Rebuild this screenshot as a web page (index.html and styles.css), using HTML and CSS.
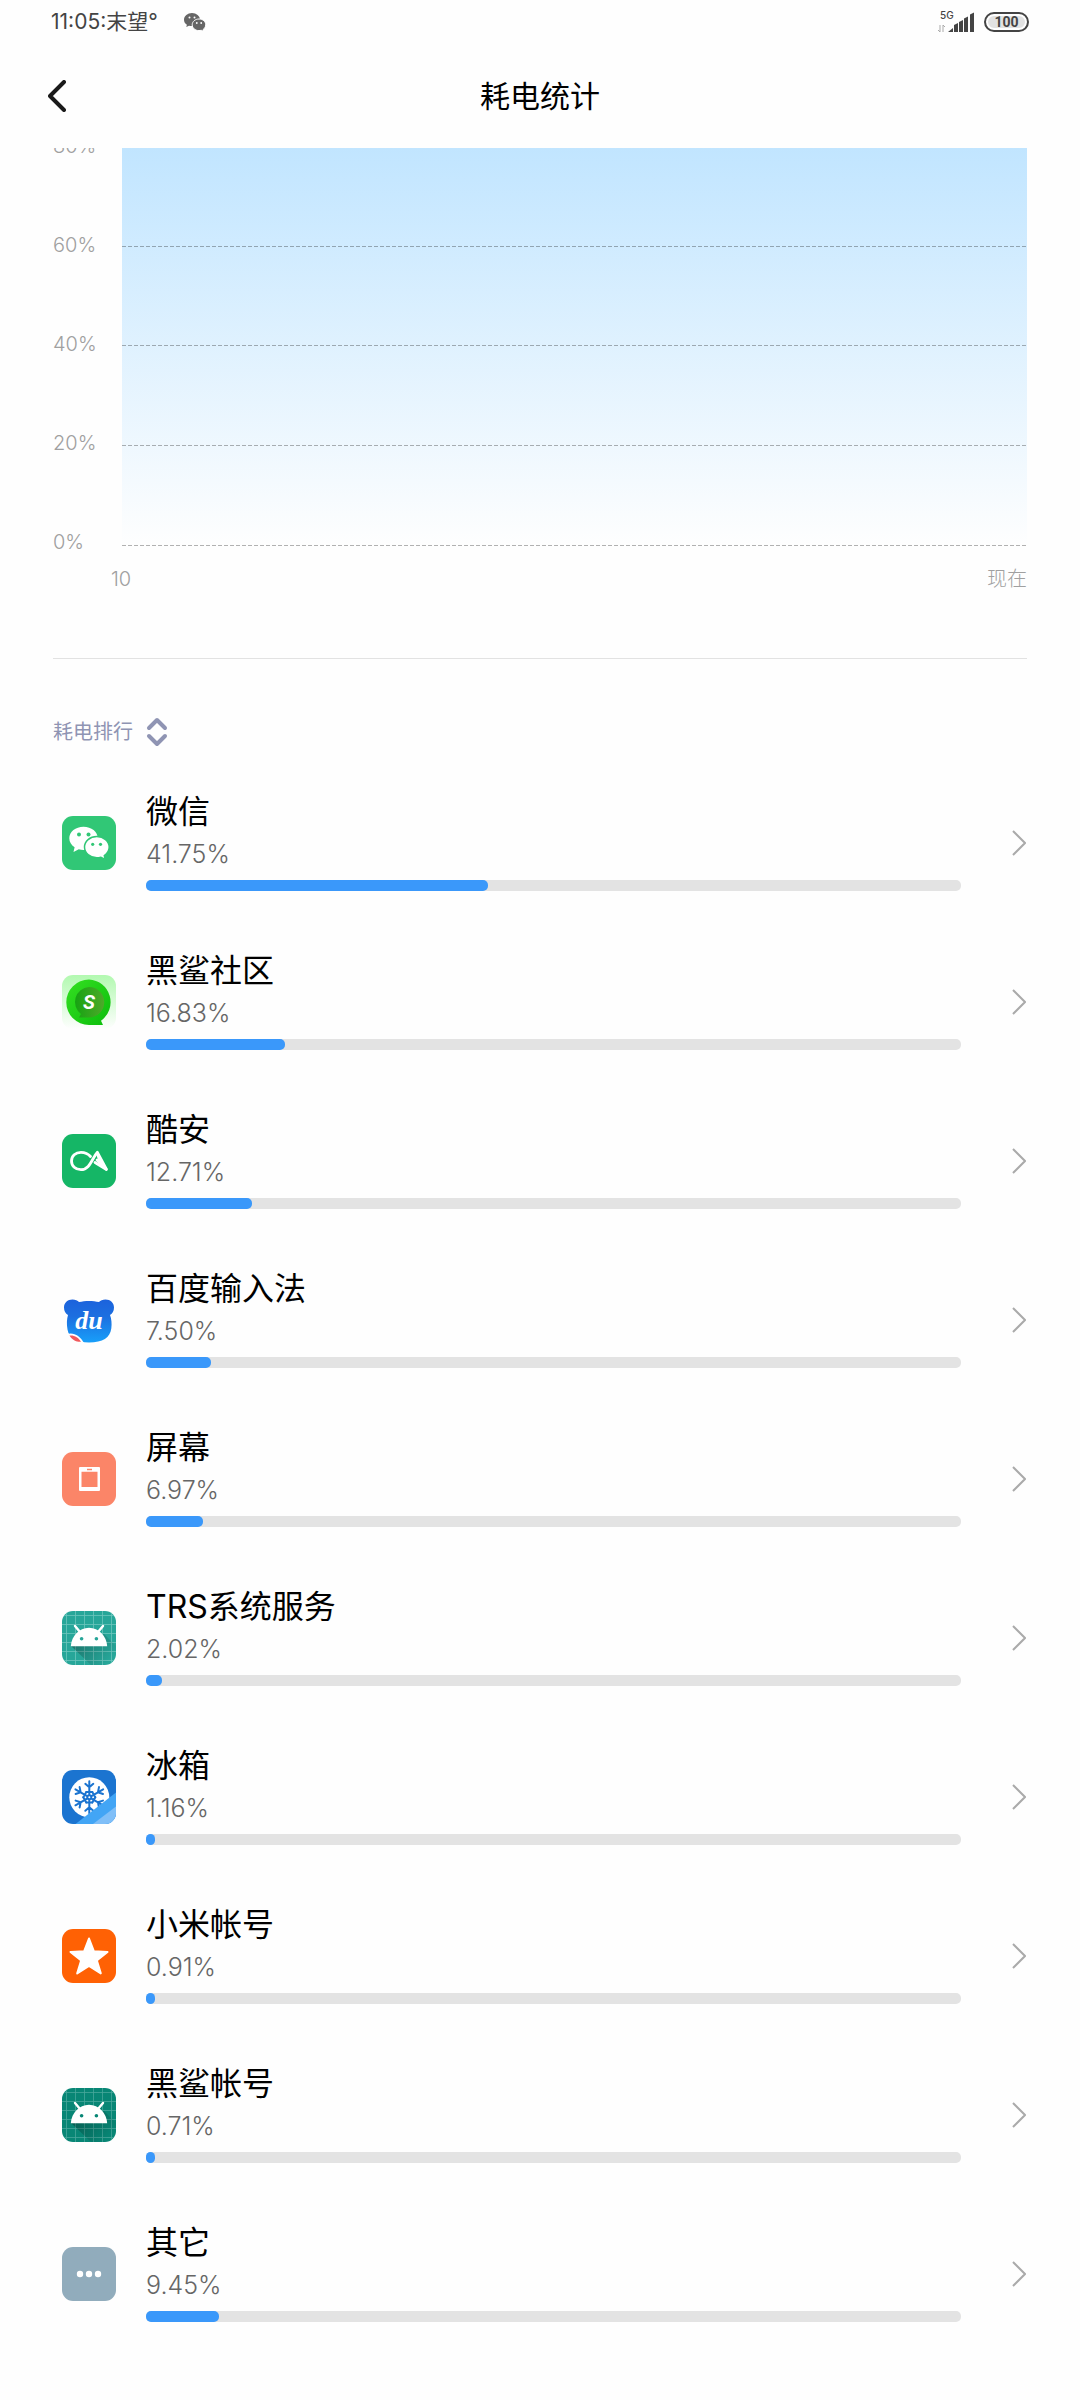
FILE: index.html
```html
<!DOCTYPE html>
<html lang="zh-CN">
<head>
  <meta charset="utf-8">
  <title>耗电统计</title>
  <meta name="viewport" content="width=device-width">
  <link rel="stylesheet" href="styles.css">
</head>
<body>

<div class="status">
  <span class="status-time">11:05:末望°</span>
  <svg class="status-wechat" width="22" height="18" viewBox="0 0 22 18">
    <path fill="#666" d="M8 0C3.600 0 0 3 0 6.700c0 2.100 1.100 3.900 2.900 5.100L2.300 14l2.700-1.300c1 .3 1.900.4 3 .4C12.400 13.100 16 10.400 16 6.700S12.400 0 8 0z"/>
    <path fill="#666" stroke="#fefefe" d="M15 6c-3.700 0-6.800 2.500-6.800 5.800s3.100 5.800 6.800 5.800c.8 0 1.600-.1 2.300-.3l2.400 1-.5-1.900c1.500-1.100 2.500-2.700 2.500-4.600C21.700 8.500 18.700 6 15 6z"/>
    <g fill="#fefefe"><circle cx="5.500" cy="4.500" r="1"/><circle cx="10.500" cy="4.500" r="1"/><circle cx="12.800" cy="10" r=".9"/><circle cx="17.200" cy="10" r=".9"/></g>
  </svg>
  <svg class="status-signal" width="38" height="26" viewBox="0 -2 38 26">
    <text x="3" y="8" class="status-net">5G</text>
    <path d="M3 14v7l-2-2M6 21v-7l2 2" fill="none" stroke="#aaa"/>
    <path fill="#444" d="M11 21l5-4v4zM17 14l4-2V21h-4zM22 11l4-2V21h-4zM27 7.500l4-2V21h-4zM33 3.500l4-2V21h-4z"/>
  </svg>
  <span class="battery">100</span>
</div>

<header class="appbar">
  <button type="button" class="back" aria-label="返回">
    <svg width="18" height="32" viewBox="0 0 18 32"><path d="M16 2L2 16l14 14" fill="none" stroke="#1a1a1a" stroke-width="4" stroke-linecap="round" stroke-linejoin="round"/></svg>
  </button>
  <h1>耗电统计</h1>
</header>

<main>
  <section class="chart">
    <div class="chart-body">
      <div class="y-axis">
        <span>80%</span>
        <span>60%</span>
        <span>40%</span>
        <span>20%</span>
        <span>0%</span>
      </div>
      <div class="plot">
        <div class="band"></div>
        <div class="band"></div>
        <div class="band"></div>
        <div class="band"></div>
      </div>
    </div>
    <div class="x-axis"><span>10</span><span>现在</span></div>
  </section>

  <button type="button" class="sort">
    耗电排行
    <svg width="22" height="30" viewBox="0 0 22 30"><path d="M3 11l8-8 8 8M3 19l8 8 8-8" fill="none" stroke="#8f94b3" stroke-width="4" stroke-linecap="round" stroke-linejoin="round"/></svg>
  </button>

  <ul class="apps">
    <li><a class="app" href="#wechat">
      <svg class="icon" viewBox="0 0 54 54">
        <rect width="54" height="54" rx="11" fill="#31c776"/>
        <path fill="#fff" d="M21.500 10.700C13.600 10.700 7.300 15.800 7.300 22.200c0 3.700 2 6.900 5.300 9L11.500 36l5.300-2.700c1.500.4 3 .6 4.700.6 7.900 0 14.300-5.200 14.300-11.700S29.400 10.700 21.500 10.700z"/>
        <path fill="#fff" stroke="#31c776" stroke-width="1.500" d="M34.800 20.500c-6.900 0-12.300 4.700-12.300 10.600s5.400 10.700 12.300 10.700c1.500 0 2.800-.2 4.100-.6l4.300 2.300-.9-3.900c3-2 4.900-5 4.900-8.500 0-5.900-5.500-10.600-12.400-10.600z"/>
        <g fill="#31c776"><circle cx="17" cy="18.500" r="2"/><circle cx="26.500" cy="18.500" r="2"/><circle cx="30.700" cy="28.300" r="1.600"/><circle cx="38.500" cy="28.300" r="1.600"/></g>
      </svg>
      <div class="info">
        <h2>微信</h2>
        <p>41.75%</p>
        <div class="bar"><div class="fill" style="width: 42%"></div></div>
      </div>
      <svg class="arrow" viewBox="0 0 14 26"><path d="M1 1l12 12L1 25"/></svg>
    </a></li>

    <li><a class="app" href="#community">
      <svg class="icon" viewBox="0 0 54 54">
        <defs>
          <linearGradient id="mint" x2="0" y2="1"><stop stop-color="#b2f9b0"/><stop offset="1" stop-color="#fefefe"/></linearGradient>
          <linearGradient id="lime" x2="1" y2="1"><stop stop-color="#35e022"/><stop offset="1" stop-color="#0bbd0b"/></linearGradient>
          <linearGradient id="leaf" x2="1"><stop stop-color="#16a312"/><stop offset="1" stop-color="#4ea92a"/></linearGradient>
        </defs>
        <rect width="54" height="54" rx="11" fill="url(#mint)"/>
        <path fill="url(#lime)" d="M27 4.500a22.700 22.700 0 0 0 0 45.400h14l-2-4.200A22.700 22.700 0 0 0 27 4.500z"/>
        <path fill="url(#leaf)" d="M27 12a15 15 0 1 1 0 30.500H17l2-3.500A15 15 0 0 1 27 12z"/>
        <text x="27" y="34" class="mark-s">S</text>
      </svg>
      <div class="info">
        <h2>黑鲨社区</h2>
        <p>16.83%</p>
        <div class="bar"><div class="fill" style="width: 17%"></div></div>
      </div>
      <svg class="arrow" viewBox="0 0 14 26"><path d="M1 1l12 12L1 25"/></svg>
    </a></li>

    <li><a class="app" href="#coolapk">
      <svg class="icon" viewBox="0 0 54 54">
        <rect width="54" height="54" rx="11" fill="#15b666"/>
        <g fill="none" stroke="#fff" stroke-width="2.800" stroke-linejoin="round" stroke-linecap="round">
          <path d="M28.500 22.500C26 19.500 23 18.300 19 18.300c-5.500 0-9.500 3.800-9.500 8.700s4 8.700 9.500 8.700c9 0 11-11.500 16.400-17.400L44.500 35.500 33 28.500"/>
          <path d="M35.500 20L39 30M44 35l-9-9"/>
        </g>
      </svg>
      <div class="info">
        <h2>酷安</h2>
        <p>12.71%</p>
        <div class="bar"><div class="fill" style="width: 13%"></div></div>
      </div>
      <svg class="arrow" viewBox="0 0 14 26"><path d="M1 1l12 12L1 25"/></svg>
    </a></li>

    <li><a class="app" href="#ime">
      <svg class="icon" viewBox="0 0 54 54">
        <defs><linearGradient id="bear" gradientUnits="userSpaceOnUse" x1="0" y1="6" x2="0" y2="50"><stop stop-color="#1c62dc"/><stop offset=".4" stop-color="#1c6fe0"/><stop offset="1" stop-color="#18a0fa"/></linearGradient></defs>
        <path fill="url(#bear)" d="M10.500 6.500c3 0 5 1 6.500 2.500 6-1.500 14-1.500 20 0 1.500-1.500 3.500-2.500 6.500-2.500 5 0 8.500 3.500 8.500 8 0 3.500-1.500 6-4 7.500 1.500 4 2 8.500 1.300 13.500C48 44.500 41 49.500 27 49.500c-12 0-20-4-21.500-13C4.500 31 4.800 26 6 22c-2.500-1.500-4-4-4-7.500 0-4.500 3.500-8 8.500-8z"/>
        <path fill="#fefefe" d="M5 41c7-2 13 2 17 9L8 50z"/>
        <path fill="#f1595c" d="M7.500 42.500c5-.5 9 2 11.500 6.300-5 .2-9-2-11.500-6.300z"/>
        <text x="27" y="36" class="mark-du">du</text>
      </svg>
      <div class="info">
        <h2>百度输入法</h2>
        <p>7.50%</p>
        <div class="bar"><div class="fill" style="width: 8%"></div></div>
      </div>
      <svg class="arrow" viewBox="0 0 14 26"><path d="M1 1l12 12L1 25"/></svg>
    </a></li>

    <li><a class="app" href="#screen">
      <svg class="icon" viewBox="0 0 54 54">
        <rect width="54" height="54" rx="11" fill="#fb8568"/>
        <path fill="#fff" fill-rule="evenodd" d="M18 15h19a1 1 0 0 1 1 1v22a1 1 0 0 1-1 1H18a1 1 0 0 1-1-1V16a1 1 0 0 1 1-1zm1.500 4.700V35h16V19.700zM25 16.800v1.400h5v-1.400z"/>
      </svg>
      <div class="info">
        <h2>屏幕</h2>
        <p>6.97%</p>
        <div class="bar"><div class="fill" style="width: 7%"></div></div>
      </div>
      <svg class="arrow" viewBox="0 0 14 26"><path d="M1 1l12 12L1 25"/></svg>
    </a></li>

    <li><a class="app" href="#trs">
      <svg class="icon" viewBox="0 0 54 54">
        <defs>
          <clipPath id="tile"><rect width="54" height="54" rx="11"/></clipPath>
          <linearGradient id="shade" x2="1" y2=".6"><stop stop-color="#000" stop-opacity=".35"/><stop offset="1" stop-color="#000" stop-opacity="0"/></linearGradient>
        </defs>
        <g clip-path="url(#tile)">
          <rect width="54" height="54" fill="#27a699"/>
          <path stroke="#6cc5bc" stroke-width=".8" fill="none" d="M4.500 0v54M13.500 0v54M22.500 0v54M31.500 0v54M40.500 0v54M49.500 0v54M0 4.500h54M0 13.500h54M0 22.500h54M0 31.500h54M0 40.500h54M0 49.500h54"/>
          <path fill="url(#shade)" d="M9 35l20 19h25V35l-12-12z"/>
        </g>
        <path fill="#fff" d="M8.800 35.300C9.500 25 17 16.700 27 16.700S44.500 25 45.200 35.300z"/>
        <path stroke="#fff" stroke-width="2.400" stroke-linecap="round" d="M13 15l5 6M41 15l-5 6"/>
        <g fill="#27a699"><circle cx="19.600" cy="27.800" r="1.800"/><circle cx="34.400" cy="27.800" r="1.800"/></g>
      </svg>
      <div class="info">
        <h2>TRS系统服务</h2>
        <p>2.02%</p>
        <div class="bar"><div class="fill" style="width: 2%"></div></div>
      </div>
      <svg class="arrow" viewBox="0 0 14 26"><path d="M1 1l12 12L1 25"/></svg>
    </a></li>

    <li><a class="app" href="#icebox">
      <svg class="icon" viewBox="0 0 54 54">
        <defs>
          <g id="arm"><path d="M0-3V-16M0-10l-4-3.500M0-10l4-3.500M-3-5.200h6"/></g>
        </defs>
        <g clip-path="url(#tile)">
          <rect width="54" height="54" fill="#1b74d0"/>
          <circle cx="27.300" cy="27.300" r="20" fill="#fff"/>
          <g transform="translate(27.300 27.300)" fill="none" stroke="#1b74d0" stroke-width="2" stroke-linecap="round">
            <circle r="2"/>
            <use href="#arm"/>
            <use href="#arm" transform="rotate(60)"/>
            <use href="#arm" transform="rotate(120)"/>
            <use href="#arm" transform="rotate(180)"/>
            <use href="#arm" transform="rotate(240)"/>
            <use href="#arm" transform="rotate(300)"/>
          </g>
          <path fill="#42a5f5" d="M54 22.500V54H13.500z"/>
          <path fill="#80bff8" d="M54 36.500V54H31z"/>
        </g>
      </svg>
      <div class="info">
        <h2>冰箱</h2>
        <p>1.16%</p>
        <div class="bar"><div class="fill" style="width: 1%"></div></div>
      </div>
      <svg class="arrow" viewBox="0 0 14 26"><path d="M1 1l12 12L1 25"/></svg>
    </a></li>

    <li><a class="app" href="#mi-account">
      <svg class="icon" viewBox="0 0 54 54">
        <rect width="54" height="54" rx="11" fill="#ff6104"/>
        <path fill="#fff" stroke="#fff" stroke-width="2" stroke-linejoin="round" d="M27 9.500l4.800 12.700 13.700.7-10.700 8.500 4 13L27 37l-11.800 7.400 4-13L8.500 22.900l13.700-.7z"/>
      </svg>
      <div class="info">
        <h2>小米帐号</h2>
        <p>0.91%</p>
        <div class="bar"><div class="fill" style="width: 1%"></div></div>
      </div>
      <svg class="arrow" viewBox="0 0 14 26"><path d="M1 1l12 12L1 25"/></svg>
    </a></li>

    <li><a class="app" href="#shark-account">
      <svg class="icon" viewBox="0 0 54 54">
        <g clip-path="url(#tile)">
          <rect width="54" height="54" fill="#088675"/>
          <path stroke="#48a79a" stroke-width=".8" fill="none" d="M4.500 0v54M13.500 0v54M22.500 0v54M31.500 0v54M40.500 0v54M49.500 0v54M0 4.500h54M0 13.500h54M0 22.500h54M0 31.500h54M0 40.500h54M0 49.500h54"/>
          <path fill="url(#shade)" d="M9 35l20 19h25V35l-12-12z"/>
        </g>
        <path fill="#fff" d="M8.800 35.300C9.500 25 17 16.700 27 16.700S44.500 25 45.200 35.300z"/>
        <path stroke="#fff" stroke-width="2.400" stroke-linecap="round" d="M13 15l5 6M41 15l-5 6"/>
        <g fill="#088675"><circle cx="19.600" cy="27.800" r="1.800"/><circle cx="34.400" cy="27.800" r="1.800"/></g>
      </svg>
      <div class="info">
        <h2>黑鲨帐号</h2>
        <p>0.71%</p>
        <div class="bar"><div class="fill" style="width: 1%"></div></div>
      </div>
      <svg class="arrow" viewBox="0 0 14 26"><path d="M1 1l12 12L1 25"/></svg>
    </a></li>

    <li><a class="app" href="#other">
      <svg class="icon" viewBox="0 0 54 54">
        <rect width="54" height="54" rx="11" fill="#91acbc"/>
        <g fill="#fff"><circle cx="18" cy="27" r="3.200"/><circle cx="27" cy="27" r="3.200"/><circle cx="36" cy="27" r="3.200"/></g>
      </svg>
      <div class="info">
        <h2>其它</h2>
        <p>9.45%</p>
        <div class="bar"><div class="fill" style="width: 9%"></div></div>
      </div>
      <svg class="arrow" viewBox="0 0 14 26"><path d="M1 1l12 12L1 25"/></svg>
    </a></li>
  </ul>
</main>

</body>
</html>
```
FILE: styles.css
```css
*,
*:before,
*:after {
  box-sizing: border-box;
}

body {
  margin: 0;
  background: #fefefe;
  color: #000;
  font-family: Inter, 'Noto Sans CJK SC', sans-serif;
}

h1, h2, p, ul {
  margin: 0;
  padding: 0;
  font-weight: 400;
}

button {
  padding: 0;
  border: none;
  background: none;
  font-family: inherit;
  cursor: pointer;
}

svg {
  display: block;
}

/* status bar */
.status {
  display: flex;
  align-items: center;
  height: 44px;
  padding: 0 51px;
}

.status-time {
  font-size: 21px;
  line-height: 24px;
  color: #444;
}

.status-wechat {
  margin-left: 26px;
}

.status-signal {
  margin-left: auto;
}

.status-net {
  font-size: 10px;
  font-weight: 500;
  fill: #444;
}

.battery {
  width: 45px;
  height: 20px;
  margin-left: 9px;
  border: 2px solid #444;
  border-radius: 10px;
  background: #e2e2e2;
  box-shadow: inset 0 0 0 2px #fefefe;
  font-family: Roboto, sans-serif;
  font-size: 14px;
  font-weight: 700;
  line-height: 16px;
  text-align: center;
  color: #444;
}

/* title bar */
.appbar {
  display: grid;
  grid-template-columns: 1fr auto 1fr;
  align-items: center;
  height: 104px;
  padding: 0 48px;
}

.back {
  justify-self: start;
}

.appbar h1 {
  font-size: 30px;
  line-height: 40px;
}

/* chart, scrolled so that its top is cut */
.chart {
  overflow: hidden;
  margin: 0 53px;
  padding-bottom: 67px;
  border-bottom: 1px solid #e2e2e2;
  font-size: 20px;
  font-weight: 300;
  line-height: 24px;
  color: #a0a0a0;
}

.chart-body {
  display: flex;
}

.y-axis {
  display: flex;
  flex-direction: column;
  justify-content: space-between;
  width: 69px;
  height: 420px;
  margin-top: -14px;
}

.plot {
  display: grid;
  grid-template-rows: repeat(2, 99px) repeat(2, 100px);
  flex: 1;
  height: 398px;
  background: linear-gradient(#c1e5ff, #fefefe);
}

.band {
  background: repeating-linear-gradient(90deg, rgba(0, 0, 0, .3) 0 4px, transparent 4px 6px) bottom / 100% 1px no-repeat;
}

.x-axis {
  display: flex;
  justify-content: space-between;
  padding: 13px 0 0 58px;
}

.sort {
  display: flex;
  align-items: center;
  gap: 13px;
  margin: 58px 53px 16px;
  font-size: 20px;
  line-height: 30px;
  color: #8f94b3;
}

/* app list */
.apps {
  list-style: none;
}

.app {
  display: flex;
  align-items: center;
  height: 159px;
  padding: 0 54px 0 62px;
  color: inherit;
  text-decoration: none;
}

.icon {
  width: 54px;
  height: 54px;
}

.info {
  flex: 1;
  margin: 0 51px 0 30px;
  padding-bottom: 2px;
}

.info h2 {
  font-size: 32px;
  line-height: 40px;
}

.info p {
  margin: 6px 0 10px;
  font-size: 25px;
  font-weight: 300;
  line-height: 32px;
  color: #666;
}

.bar {
  height: 11px;
  border-radius: 5px;
  background: #e3e3e3;
}

.fill {
  min-width: 9px;
  height: 11px;
  border-radius: 5px;
  background: #3a98fa;
}

.arrow {
  width: 14px;
  height: 26px;
  fill: none;
  stroke: #aaa;
  stroke-width: 2;
}

.mark-s {
  font: italic 700 20px Roboto, sans-serif;
  text-anchor: middle;
  fill: #fff;
}

.mark-du {
  font: italic 700 26px 'Liberation Serif', serif;
  text-anchor: middle;
  fill: #fff;
}
```
